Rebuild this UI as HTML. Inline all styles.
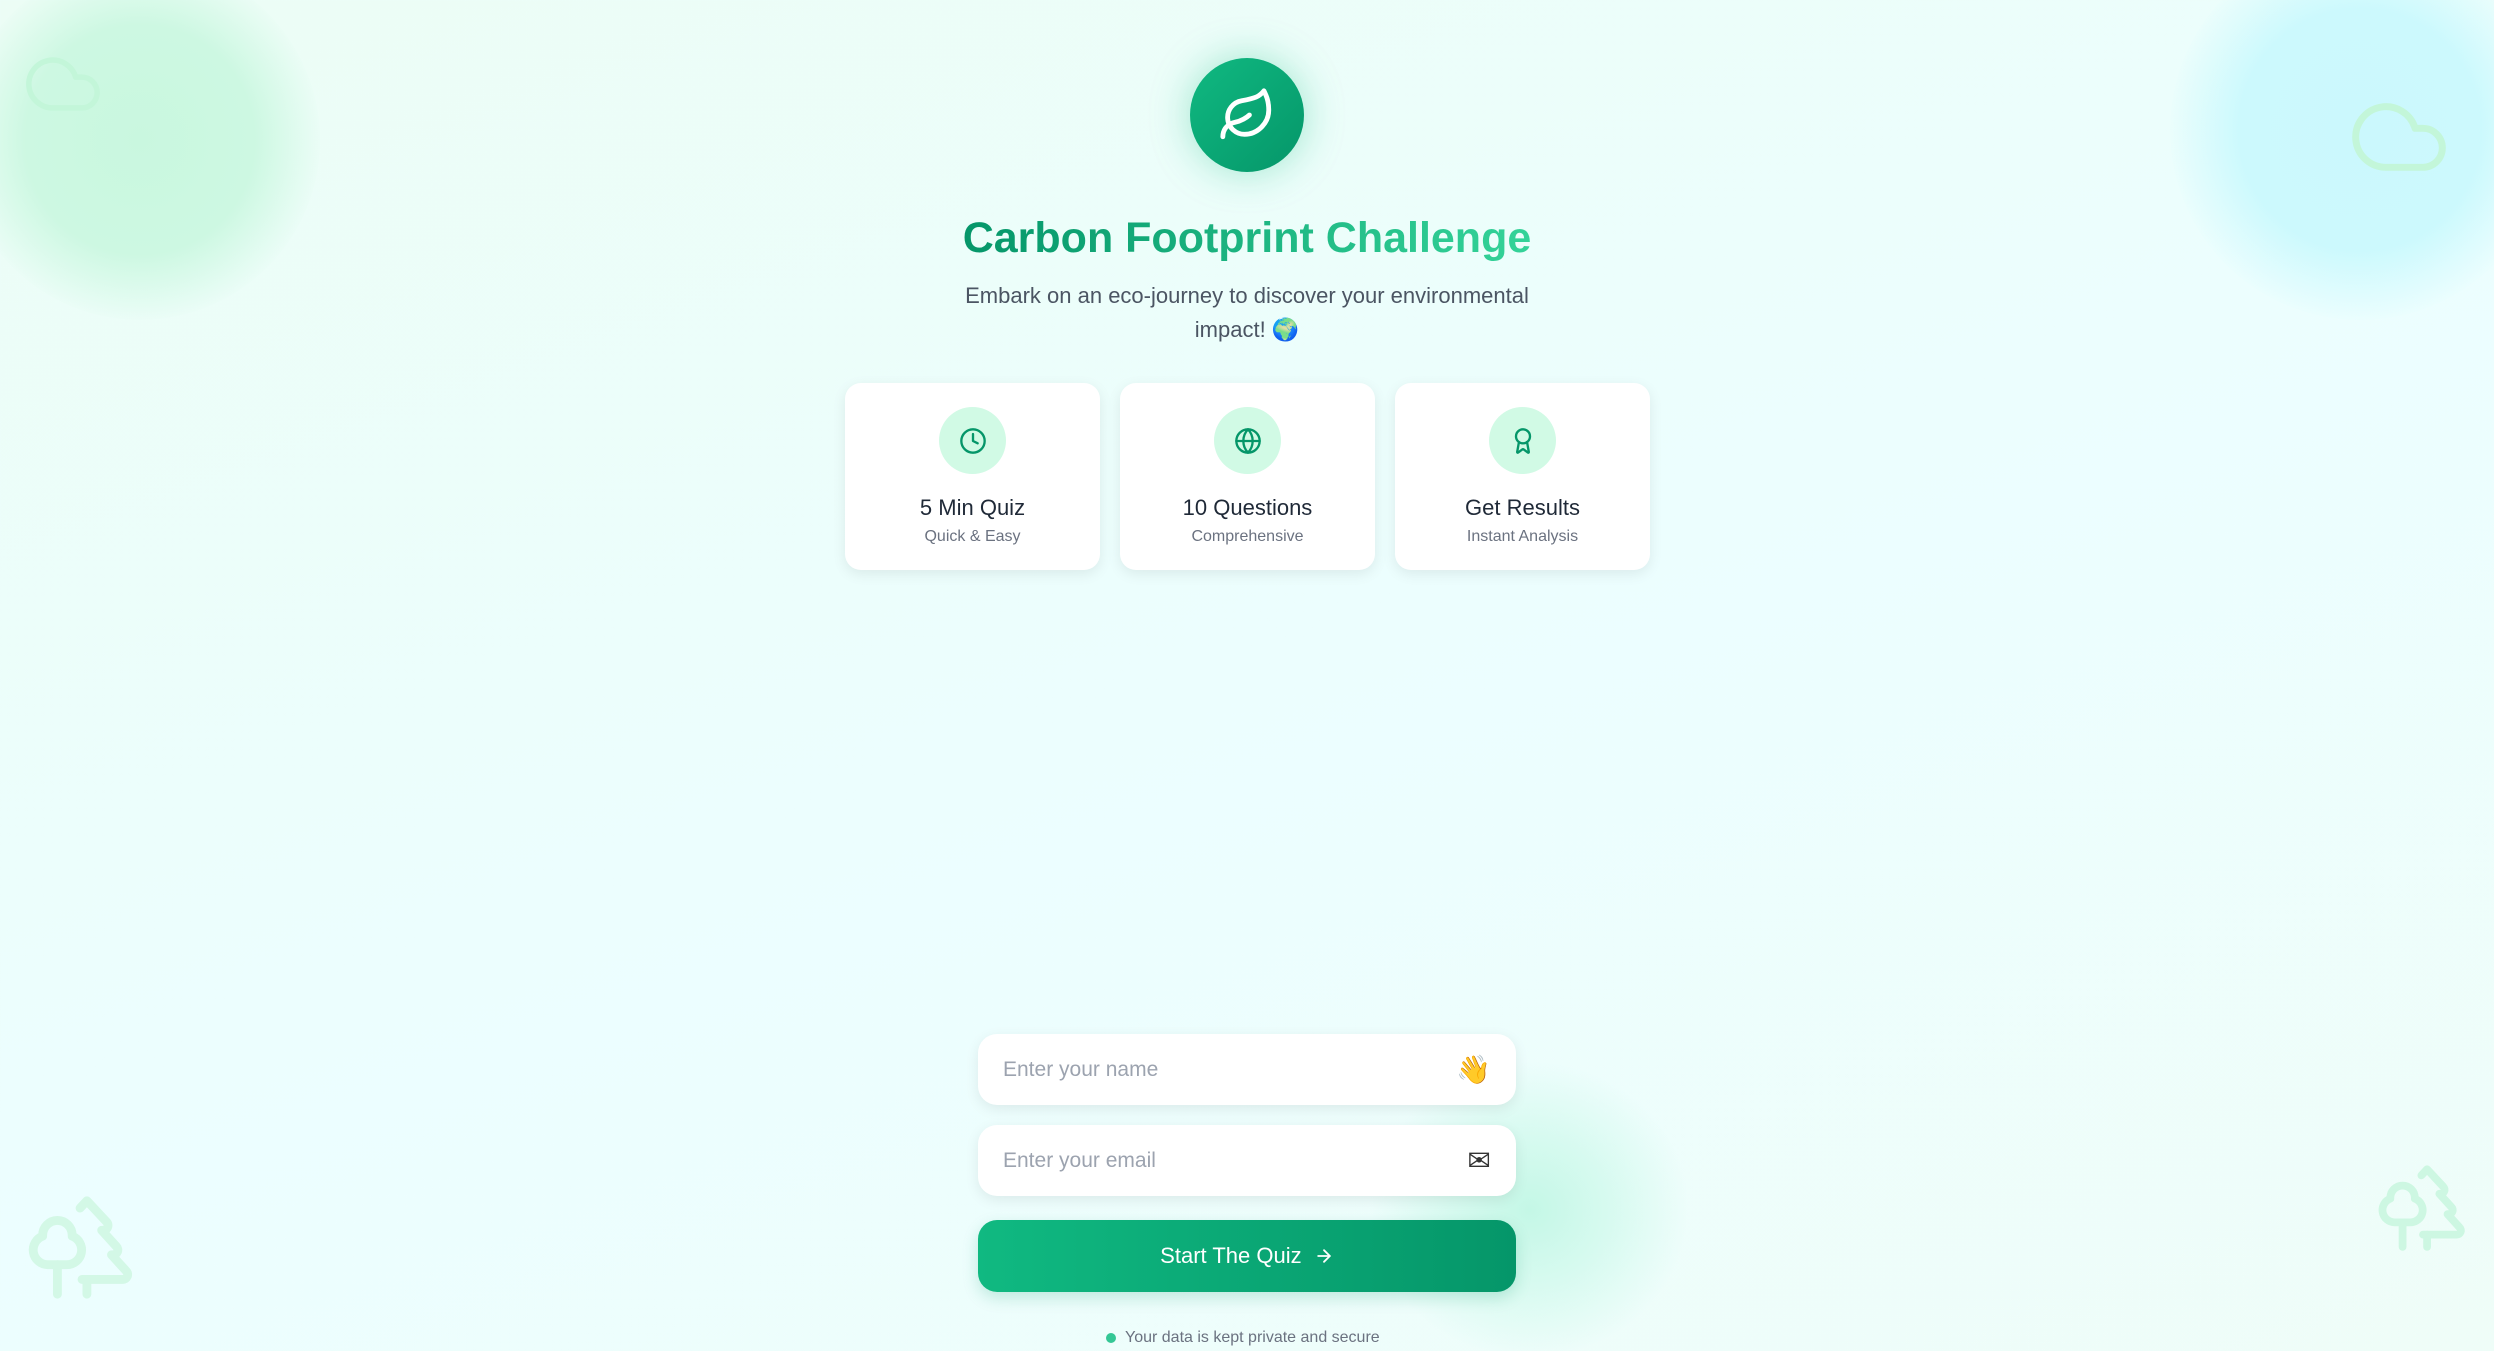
<!DOCTYPE html>
<html><head><meta charset="utf-8">
<style>
*{margin:0;padding:0;box-sizing:border-box}
html,body{width:2494px;height:1351px;overflow:hidden}
body{font-family:"Liberation Sans","DejaVu Sans",sans-serif;position:relative;
background:linear-gradient(160deg,#ecfdf5 0%,#ecfeff 55%,#effdf8 100%);}
.blob{position:absolute;border-radius:50%}
.abs{position:absolute}
.logo{position:absolute;left:1190px;top:58px;width:114px;height:114px;border-radius:50%;
background:linear-gradient(135deg,#10b981,#059669);box-shadow:0 0 40px rgba(16,185,129,.35);
display:flex;align-items:center;justify-content:center}
h1{position:absolute;left:0;width:2494px;top:210px;text-align:center;font-size:43px;font-weight:bold;line-height:56px}
h1 span{background:linear-gradient(90deg,#059669,#34d399);-webkit-background-clip:text;background-clip:text;color:transparent}
.sub{position:absolute;left:947px;width:600px;top:279px;text-align:center;font-size:22px;line-height:34px;color:#4b5563}
.card{position:absolute;top:383px;width:255px;height:187px;background:#fff;border-radius:16px;box-shadow:0 4px 14px rgba(0,0,0,.08);text-align:center}
.ic{width:67px;height:67px;border-radius:50%;background:#d1fae5;margin:24px auto 0;display:flex;align-items:center;justify-content:center}
.ct{font-size:22px;color:#1f2937;margin-top:20px;line-height:28px}
.cs{font-size:16px;color:#6b7280;margin-top:6px}
.inp{position:absolute;left:978px;width:538px;height:71px;background:#fff;border-radius:19px;box-shadow:0 4px 14px rgba(0,0,0,.08);
font-size:21px;color:#9ca3af;padding-left:25px;line-height:71px}
.inp .e{position:absolute;right:25px;top:0;font-size:28px;color:#333}
.btn{position:absolute;left:978px;top:1220px;width:538px;height:72px;border-radius:19px;background:linear-gradient(90deg,#10b981,#059669);
color:#fff;font-size:22px;text-align:center;line-height:72px;box-shadow:0 6px 16px rgba(5,150,105,.2)}
</style></head><body>
<div class="blob" style="left:-40px;top:-40px;width:360px;height:360px;background:radial-gradient(circle,#c9f7df 0%,#cdf8e2 45%,rgba(209,250,229,0) 72%)"></div>
<div class="blob" style="left:2170px;top:-60px;width:380px;height:380px;background:radial-gradient(circle,#cbf8fd 0%,#ccf9fd 45%,rgba(207,250,254,0) 72%)"></div>
<div class="blob" style="left:1370px;top:1060px;width:320px;height:300px;background:radial-gradient(ellipse,#c4f7e6 0%,rgba(200,248,232,.6) 35%,rgba(209,250,229,0) 70%)"></div>

<svg class="abs" style="left:22px;top:43px" width="82" height="82" viewBox="0 0 24 24" fill="none" stroke="#c3f6d9" stroke-width="1.6" stroke-linecap="round" stroke-linejoin="round"><path d="M17.5 19H9a7 7 0 1 1 6.71-9h1.79a4.5 4.5 0 1 1 0 9Z"/></svg>
<svg class="abs" style="left:2347px;top:85px" width="104" height="104" viewBox="0 0 24 24" fill="none" stroke="#c3f6d9" stroke-width="1.6" stroke-linecap="round" stroke-linejoin="round"><path d="M17.5 19H9a7 7 0 1 1 6.71-9h1.79a4.5 4.5 0 1 1 0 9Z"/></svg>
<svg class="abs" style="left:23px;top:1186px" width="118" height="118" viewBox="0 0 24 24" fill="none" stroke="#d3f8e6" stroke-width="1.8" stroke-linecap="round" stroke-linejoin="round"><path d="M10 10v.2A3 3 0 0 1 8.9 16H5a3 3 0 0 1-1-5.8V10a3 3 0 0 1 6 0Z"/><path d="M7 16v6"/><path d="M13 19v3"/><path d="M12 19h8.3a1 1 0 0 0 .7-1.7L18 14h.3a1 1 0 0 0 .7-1.7L16 9h.2a1 1 0 0 0 .8-1.7L13 3l-1.4 1.5"/></svg>
<svg class="abs" style="left:2374px;top:1157px" width="98" height="98" viewBox="0 0 24 24" fill="none" stroke="#cdf7e2" stroke-width="1.9" stroke-linecap="round" stroke-linejoin="round"><path d="M10 10v.2A3 3 0 0 1 8.9 16H5a3 3 0 0 1-1-5.8V10a3 3 0 0 1 6 0Z"/><path d="M7 16v6"/><path d="M13 19v3"/><path d="M12 19h8.3a1 1 0 0 0 .7-1.7L18 14h.3a1 1 0 0 0 .7-1.7L16 9h.2a1 1 0 0 0 .8-1.7L13 3l-1.4 1.5"/></svg>

<div class="logo"><svg width="58" height="58" viewBox="0 0 24 24" fill="none" stroke="#fff" stroke-width="2" stroke-linecap="round" stroke-linejoin="round"><path d="M11 20A7 7 0 0 1 9.8 6.1C15.5 5 17 4.48 19 2c1 2 2 4.18 2 8 0 5.5-4.78 10-10 10Z"/><path d="M2 21c0-3 1.85-5.36 5.08-6C9.5 14.520 12 13 13 12"/></svg></div>

<h1><span>Carbon Footprint Challenge</span></h1>
<div class="sub">Embark on an eco-journey to discover your environmental impact! 🌍</div>

<div class="card" style="left:845px"><div class="ic"><svg width="28" height="28" viewBox="0 0 24 24" fill="none" stroke="#059669" stroke-width="2" stroke-linecap="round" stroke-linejoin="round"><circle cx="12" cy="12" r="10"/><polyline points="12 6 12 12 16 14"/></svg></div><div class="ct">5 Min Quiz</div><div class="cs">Quick &amp; Easy</div></div>
<div class="card" style="left:1120px"><div class="ic"><svg width="28" height="28" viewBox="0 0 24 24" fill="none" stroke="#059669" stroke-width="2" stroke-linecap="round" stroke-linejoin="round"><circle cx="12" cy="12" r="10"/><path d="M12 2a14.5 14.5 0 0 0 0 20 14.5 14.5 0 0 0 0-20"/><path d="M2 12h20"/></svg></div><div class="ct">10 Questions</div><div class="cs">Comprehensive</div></div>
<div class="card" style="left:1395px"><div class="ic"><svg width="28" height="28" viewBox="0 0 24 24" fill="none" stroke="#059669" stroke-width="2" stroke-linecap="round" stroke-linejoin="round"><path d="m15.477 12.89 1.515 8.526a.5.5 0 0 1-.81.47l-3.58-2.687a1 1 0 0 0-1.197 0l-3.586 2.686a.5.5 0 0 1-.81-.469l1.514-8.526"/><circle cx="12" cy="8" r="6"/></svg></div><div class="ct">Get Results</div><div class="cs">Instant Analysis</div></div>

<div class="inp" style="top:1034px">Enter your name<span class="e">👋</span></div>
<div class="inp" style="top:1125px">Enter your email<span class="e">✉</span></div>
<div class="btn">Start The Quiz&nbsp;&nbsp;<svg style="vertical-align:-3px" width="20" height="20" viewBox="0 0 24 24" fill="none" stroke="#fff" stroke-width="2.2" stroke-linecap="round" stroke-linejoin="round"><path d="M5 12h14"/><path d="m12 5 7 7-7 7"/></svg></div>

<div class="abs" style="left:1106px;top:1333px;width:10px;height:10px;border-radius:50%;background:#34c795"></div>
<div class="abs" style="left:1125px;top:1327px;font-size:16px;color:#6b7280;line-height:22px">Your data is kept private and secure</div>
</body></html>
